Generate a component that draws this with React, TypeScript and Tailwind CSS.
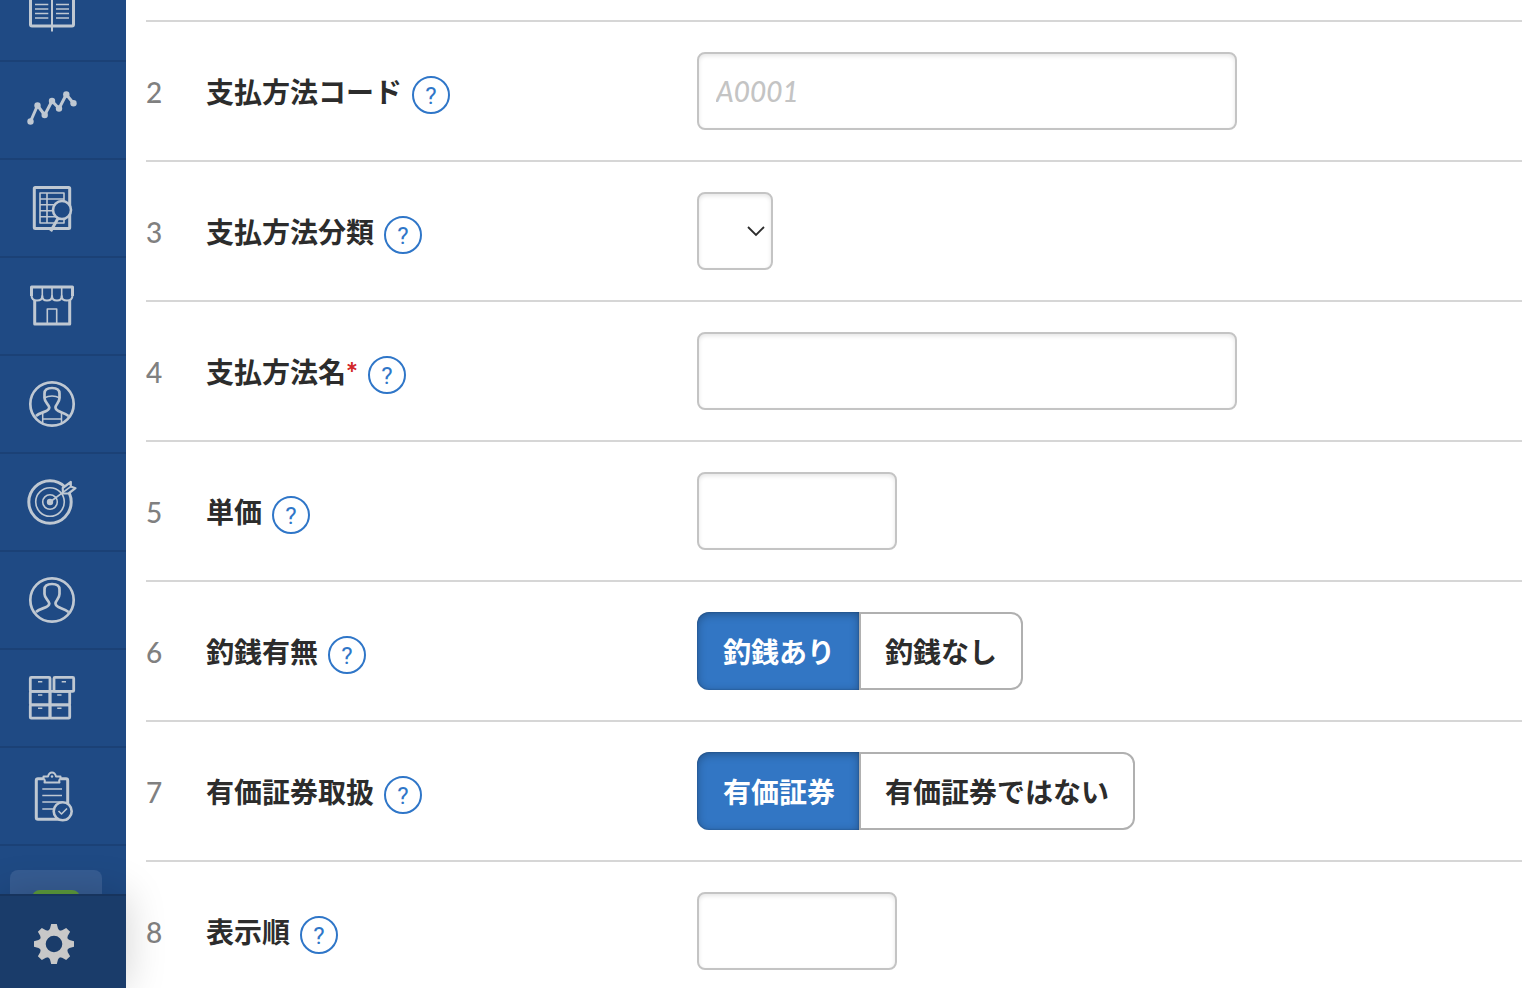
import type { ReactNode } from "react";

const HEAD =
  "M12 40 C17 35.500 25.300 36 25.300 31.500 C25 28.500 20.500 26.500 20.500 22 V17.500 C20.500 13.500 23 12 28 12 C33 12 35.500 13.500 35.500 17.500 V22 C35.500 26.500 31.500 28.500 31.500 31.500 C31.500 36 39 35.500 44.500 40";

function SideIcon({ children }: { children: ReactNode }) {
  return (
    <svg
      viewBox="0 0 56 56"
      className="h-14 w-14"
      fill="none"
      stroke="currentColor"
      strokeWidth="3"
      strokeLinejoin="round"
      aria-hidden="true"
    >
      {children}
    </svg>
  );
}

const menu = [
  {
    label: "帳簿",
    icon: (
      <SideIcon>
        <path d="M6.500 8 V40.500 Q6.500 42 8 42 H48 Q49.500 42 49.500 40.500 V8 Z" />
        <path d="M28 8 V47.500" strokeWidth="2" />
        <path
          d="M11 20.500 H24.300 M11 25 H24.300 M11 29.500 H24.300 M11 34 H24.300 M32 20.500 H45 M32 25 H45 M32 29.500 H45 M32 34 H45"
          strokeWidth="1.600"
        />
      </SideIcon>
    ),
  },
  {
    label: "売上分析",
    icon: (
      <SideIcon>
        <path d="M6.500 39.500 L13.500 23.500 L20.700 33 L28 19 L35 26.500 L42.300 12.500 L49.500 21.300" />
        <g fill="currentColor" stroke="none">
          <circle cx="6.500" cy="39.500" r="3.200" />
          <circle cx="13.500" cy="23.500" r="3.200" />
          <circle cx="20.700" cy="33" r="3.200" />
          <circle cx="28" cy="19" r="3.200" />
          <circle cx="35" cy="26.500" r="3.200" />
          <circle cx="42.300" cy="12.500" r="3.200" />
          <circle cx="49.500" cy="21.300" r="3.200" />
        </g>
      </SideIcon>
    ),
  },
  {
    label: "取引履歴",
    icon: (
      <SideIcon>
        <rect x="10.300" y="7.500" width="35.400" height="41" rx="1" />
        <path
          d="M16 13 H40 V43 H16 Z M16 19 H40 M16 24.700 H40 M16 30.700 H40 M16 36.700 H40 M23 13 V43"
          strokeWidth="1.600"
        />
        <path d="M34 38.300 L26.700 51.300" />
        <circle cx="38" cy="30" r="9" fill="#1f4a84" strokeWidth="2.600" />
      </SideIcon>
    ),
  },
  {
    label: "店舗",
    icon: (
      <SideIcon>
        <path d="M10.700 22 V46 H45.700 V22 M7.500 18 V9 H48.500 V18" />
        <path
          d="M7.500 17 Q7.500 22.500 13 22.500 Q18.300 22.500 18.300 18 Q18.300 22.500 23 22.500 Q28 22.500 28 18 Q28 22.500 33 22.500 Q37.700 22.500 37.700 18 Q37.700 22.500 43 22.500 Q48.500 22.500 48.500 17"
          strokeWidth="2"
        />
        <path d="M18.300 9 V19 M28 9 V19 M37.700 9 V19 M23.300 46 V31 H32.700 V46" strokeWidth="1.600" />
      </SideIcon>
    ),
  },
  {
    label: "スタッフ",
    icon: (
      <SideIcon>
        <circle cx="28" cy="28" r="21.700" strokeWidth="2.700" />
        <path d={HEAD} strokeWidth="2.700" />
        <path d="M20 22 Q28 18 36 22 M18.700 36.500 V48 M37.500 36.500 V48 M18.700 43 H37.500" strokeWidth="1.500" />
      </SideIcon>
    ),
  },
  {
    label: "目標",
    icon: (
      <SideIcon>
        <circle cx="26" cy="28" r="21.200" />
        <circle cx="26" cy="28" r="14.300" strokeWidth="1.600" />
        <circle cx="26" cy="28" r="7.300" strokeWidth="1.600" />
        <circle cx="26" cy="28" r="3.200" fill="currentColor" stroke="none" />
        <path
          d="M38.700 14 L46.800 8 L46.800 12.500 L51.500 14.200 L44.500 19.500 L39 19.500 Z"
          fill="#1f4a84"
          strokeWidth="2.200"
        />
        <path d="M26 28 L46.700 12.700" strokeWidth="1.600" />
      </SideIcon>
    ),
  },
  {
    label: "顧客",
    icon: (
      <SideIcon>
        <circle cx="28" cy="28" r="21.700" strokeWidth="2.700" />
        <path d={HEAD} strokeWidth="2.700" />
      </SideIcon>
    ),
  },
  {
    label: "在庫",
    icon: (
      <SideIcon>
        <rect x="6.300" y="7.400" width="19.700" height="14" rx="1" strokeWidth="2.800" />
        <rect x="30" y="7.400" width="19.700" height="14" rx="1" strokeWidth="2.800" />
        <rect x="6.300" y="21.400" width="19.700" height="13.400" rx="1" strokeWidth="2.800" />
        <rect x="26" y="21.400" width="19.700" height="13.400" rx="1" strokeWidth="2.800" />
        <rect x="6.300" y="34.800" width="19.700" height="13.400" rx="1" strokeWidth="2.800" />
        <rect x="26" y="34.800" width="19.700" height="13.400" rx="1" strokeWidth="2.800" />
        <path
          d="M14 11.700 H18.300 M37.700 11.700 H42 M14 25 H18.300 M33.200 25 H37.500 M14 38.300 H18.300 M33.200 38.300 H37.500"
          strokeWidth="1.500"
        />
      </SideIcon>
    ),
  },
  {
    label: "棚卸",
    icon: (
      <SideIcon>
        <path d="M19 10.700 H14 Q12.300 10.700 12.300 12.400 V49.600 Q12.300 51.300 14 51.300 H42 Q43.700 51.300 43.700 49.600 V12.400 Q43.700 10.700 42 10.700 H37" />
        <path
          d="M20.500 14.500 Q21.500 12.500 19.500 10.500 V8.500 H24 Q25 4.500 28 4.500 Q31 4.500 32 8.500 H36.500 V10.500 Q34.500 12.500 35.500 14.500 Z"
          strokeWidth="2"
        />
        <circle cx="28" cy="8.500" r="1.200" fill="currentColor" stroke="none" />
        <path d="M18.300 21 H38 M18.300 27.500 H38 M18.300 34 H38 M18.300 41 H30" strokeWidth="1.500" />
        <circle cx="38.700" cy="43.300" r="9" fill="#1f4a84" strokeWidth="2.600" />
        <path d="M34.500 43 L37.500 46 L43 40.500" strokeWidth="1.600" />
      </SideIcon>
    ),
  },
];

function Gear() {
  return (
    <svg viewBox="-20 -20 40 40" className="h-10 w-10 text-[#c8c8c8]" fill="currentColor" aria-hidden="true">
      <path
        fillRule="evenodd"
        d="M0 -14.500 A14.500 14.500 0 1 1 0 14.500 A14.500 14.500 0 1 1 0 -14.500 Z M0 -8.300 A8.300 8.300 0 1 0 0 8.300 A8.300 8.300 0 1 0 0 -8.300 Z"
      />
      {[0, 45, 90, 135, 180, 225, 270, 315].map((angle) => (
        <path key={angle} transform={`rotate(${angle})`} d="M-2.800 -20 H2.800 L4 -15.500 L6 -12.500 H-6 L-4 -15.500 Z" />
      ))}
    </svg>
  );
}

function Sidebar() {
  return (
    <aside className="flex h-screen w-[126px] shrink-0 flex-col bg-[#1f4a84] text-[#bfc8d2]">
      <nav className="min-h-0 flex-1 overflow-hidden">
        {/* the list is scrolled a little way down */}
        <ul className="-mt-9">
          {menu.map((item) => (
            <li key={item.label}>
              <a
                href="#"
                aria-label={item.label}
                className="flex h-[98px] items-center border-b-2 border-[#1b4176] pl-6"
              >
                {item.icon}
              </a>
            </li>
          ))}
          <li className="px-2.5 pt-6">
            <a href="#" aria-label="アプリ" className="block h-[92px] w-[92px] rounded-lg bg-[#365c92] px-[22px] pt-5">
              <span className="block h-12 rounded-lg bg-[#5c9a3c]" />
            </a>
          </li>
        </ul>
      </nav>
      <a
        href="#"
        aria-label="設定"
        className="relative z-10 flex h-[94px] shrink-0 items-start border-t-2 border-[#17345d] bg-[#1a3c6a] pt-7 pl-[34px] shadow-[0_0_40px_rgba(0,0,0,0.18)]"
      >
        <Gear />
      </a>
    </aside>
  );
}

const fieldClass =
  "h-[78px] rounded-lg border-2 border-[#c4c4c4] bg-white px-[17px] text-[28px] font-medium shadow-[inset_0_2px_4px_rgba(0,0,0,0.1)] placeholder:text-[#c4c4c4] placeholder:italic";

function Segment({ name, options }: { name: string; options: string[] }) {
  return (
    <div role="radiogroup" aria-labelledby={`${name}-label`} className="flex">
      {options.map((option, i) => (
        <label
          key={option}
          className="flex h-[78px] cursor-pointer items-center border-2 border-[#b0b0b0] px-6 pt-0.5 text-[28px] font-bold whitespace-nowrap first:rounded-l-xl first:border-r-0 last:rounded-r-xl has-checked:border-0 has-checked:bg-[#3276c4] has-checked:pr-6 has-checked:pl-[26px] has-checked:text-white has-checked:shadow-[inset_0_2px_10px_rgba(0,0,0,0.3),inset_0_0_2px_rgba(0,0,0,0.3)]"
        >
          <input type="radio" name={name} defaultChecked={i === 0} className="sr-only" />
          {option}
        </label>
      ))}
    </div>
  );
}

interface RowProps {
  no: number;
  id: string;
  label: string;
  required?: boolean;
  group?: boolean;
  children: ReactNode;
}

function Row({ no, id, label, required, group, children }: RowProps) {
  const text = (
    <>
      {label}
      {required && <span className="font-black text-[#d22828]">*</span>}
    </>
  );

  return (
    <div className="grid grid-cols-[60px_491px_1fr] items-center border-t-2 border-[#d6d6d6] py-[30px]">
      <span className="pt-0.5 text-[28px] font-medium text-[#808080]">{no}</span>
      <div className="flex items-end gap-2.5">
        {group ? (
          <span id={`${id}-label`} className="pt-0.5 text-[28px] leading-[44px] font-bold">
            {text}
          </span>
        ) : (
          <label htmlFor={id} className="pt-0.5 text-[28px] leading-[44px] font-bold">
            {text}
          </label>
        )}
        <button
          type="button"
          aria-label={`${label}のヘルプ`}
          className="flex h-[38px] w-[38px] items-center justify-center rounded-full border-2 border-[#2f76c8] pt-0.5 font-[Roboto] text-2xl text-[#2f76c8]"
        >
          ?
        </button>
      </div>
      <div className="flex">{children}</div>
    </div>
  );
}

export default function App() {
  return (
    <div className="flex h-screen overflow-hidden bg-white font-['Lato','Noto_Sans_CJK_JP',sans-serif] text-[#2c2c2c]">
      <Sidebar />
      <main className="min-w-0 flex-1 overflow-hidden pt-5 pl-5">
        <form>
          <Row no={2} id="code" label="支払方法コード">
            <input id="code" type="text" placeholder="A0001" className={`${fieldClass} w-[540px]`} />
          </Row>
          <Row no={3} id="category" label="支払方法分類">
            <div className="relative">
              <select id="category" className={`${fieldClass} w-[76px] appearance-none`}>
                <option value=""></option>
              </select>
              <svg
                viewBox="0 0 18 12"
                className="pointer-events-none absolute top-[33px] right-2 h-3 w-[18px]"
                fill="none"
                stroke="currentColor"
                strokeWidth="1.800"
                aria-hidden="true"
              >
                <path d="M1 2 L9 10 L17 2" />
              </svg>
            </div>
          </Row>
          <Row no={4} id="name" label="支払方法名" required>
            <input id="name" type="text" required className={`${fieldClass} w-[540px]`} />
          </Row>
          <Row no={5} id="price" label="単価">
            <input id="price" type="text" className={`${fieldClass} w-[200px]`} />
          </Row>
          <Row no={6} id="change" label="釣銭有無" group>
            <Segment name="change" options={["釣銭あり", "釣銭なし"]} />
          </Row>
          <Row no={7} id="voucher" label="有価証券取扱" group>
            <Segment name="voucher" options={["有価証券", "有価証券ではない"]} />
          </Row>
          <Row no={8} id="order" label="表示順">
            <input id="order" type="text" className={`${fieldClass} w-[200px]`} />
          </Row>
        </form>
      </main>
    </div>
  );
}
